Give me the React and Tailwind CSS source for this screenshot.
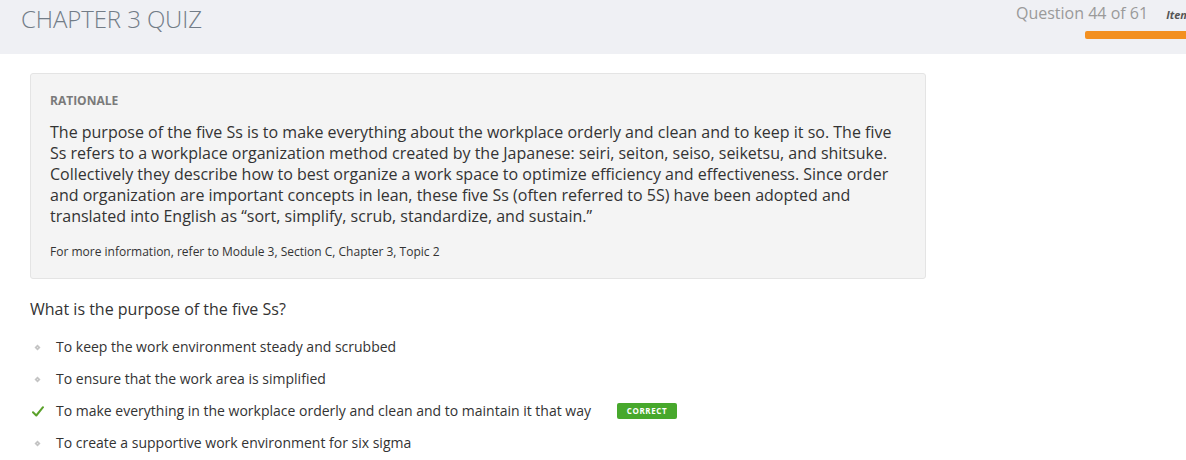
import React from "react";

const options = [
  { text: "To keep the work environment steady and scrubbed", correct: false },
  { text: "To ensure that the work area is simplified", correct: false },
  { text: "To make everything in the workplace orderly and clean and to maintain it that way", correct: true },
  { text: "To create a supportive work environment for six sigma", correct: false },
];

function Diamond() {
  return (
    <svg width="7" height="7" viewBox="0 0 7 7">
      <path d="M3.5 0.5 L6.5 3.5 L3.5 6.5 L0.5 3.5 Z" fill="#c4c4c4" />
      <rect x="3" y="3" width="1" height="1" fill="#e6e6e6" />
    </svg>
  );
}

function Check() {
  return (
    <svg width="12" height="11" viewBox="0 0 12 11">
      <path d="M1 6.2 L4.3 9.5 L11 1.2" stroke="#5aa12a" strokeWidth="2" fill="none" strokeLinecap="round" strokeLinejoin="round" />
    </svg>
  );
}

export default function App() {
  return (
    <div className="w-[1186px] h-[460px] overflow-hidden bg-white" style={{ fontFamily: '"Open Sans", "Liberation Sans", sans-serif' }}>
      <header className="h-[54px] bg-[#eff0f4] flex justify-between overflow-hidden">
        <h1 className="pl-[21px] pt-[3px] text-[24px] leading-[32px] font-light text-[#727c87] tracking-[-0.1px]">CHAPTER 3 QUIZ</h1>
        <div className="flex flex-col items-end shrink-0 w-[170px]">
          <div className="flex items-baseline pt-[2px] h-[24px] w-full whitespace-nowrap">
            <span className="text-[16px] leading-[22px] text-[#9a9a9a]">Question 44 of 61</span>
            <span className="ml-[18px] text-[11px] font-bold italic text-[#555]">Item</span>
          </div>
          <div className="mt-[7px] w-[101px] h-[8px] bg-[#f39020] rounded-l-[2px]" />
        </div>
      </header>

      <main className="pl-[30px] pt-[19px]">
        <section className="w-[896px] h-[206px] bg-[#f4f4f4] border border-[#e4e4e4] rounded-[3px] pl-[19px] pr-[24px] pt-[19px]">
          <div className="text-[12px] leading-[16px] font-bold text-[#7a7a7a]">RATIONALE</div>
          <p className="mt-[13px] text-[16px] leading-[21px] text-[#333]">
            The purpose of the five Ss is to make everything about the workplace orderly and clean and to keep it so. The five Ss refers to a workplace organization method created by the Japanese: seiri, seiton, seiso, seiketsu, and shitsuke. Collectively they describe how to best organize a work space to optimize efficiency and effectiveness. Since order and organization are important concepts in lean, these five Ss (often referred to 5S) have been adopted and translated into English as “sort, simplify, scrub, standardize, and sustain.”
          </p>
          <p className="mt-[17px] text-[12px] leading-[16px] text-[#333]">For more information, refer to Module 3, Section C, Chapter 3, Topic 2</p>
        </section>

        <h2 className="mt-[19px] text-[16px] leading-[22px] text-[#333]">What is the purpose of the five Ss?</h2>

        <ul className="mt-[17px] flex flex-col gap-[12px]">
          {options.map((o) => (
            <li key={o.text} className="flex items-center h-[20px]">
              <span className="w-[26px] flex items-center pl-[2px]">
                {o.correct ? <Check /> : <span className="pl-[2px] flex"><Diamond /></span>}
              </span>
              <span className="text-[14px] leading-[20px] text-[#333]">{o.text}</span>
              {o.correct && (
                <span className="ml-[26px] h-[16px] px-[6px] bg-[#47a82c] rounded-[2px] text-white text-[8px] font-bold tracking-[0.6px] leading-[16px] w-[60px] text-center">CORRECT</span>
              )}
            </li>
          ))}
        </ul>
      </main>
    </div>
  );
}
